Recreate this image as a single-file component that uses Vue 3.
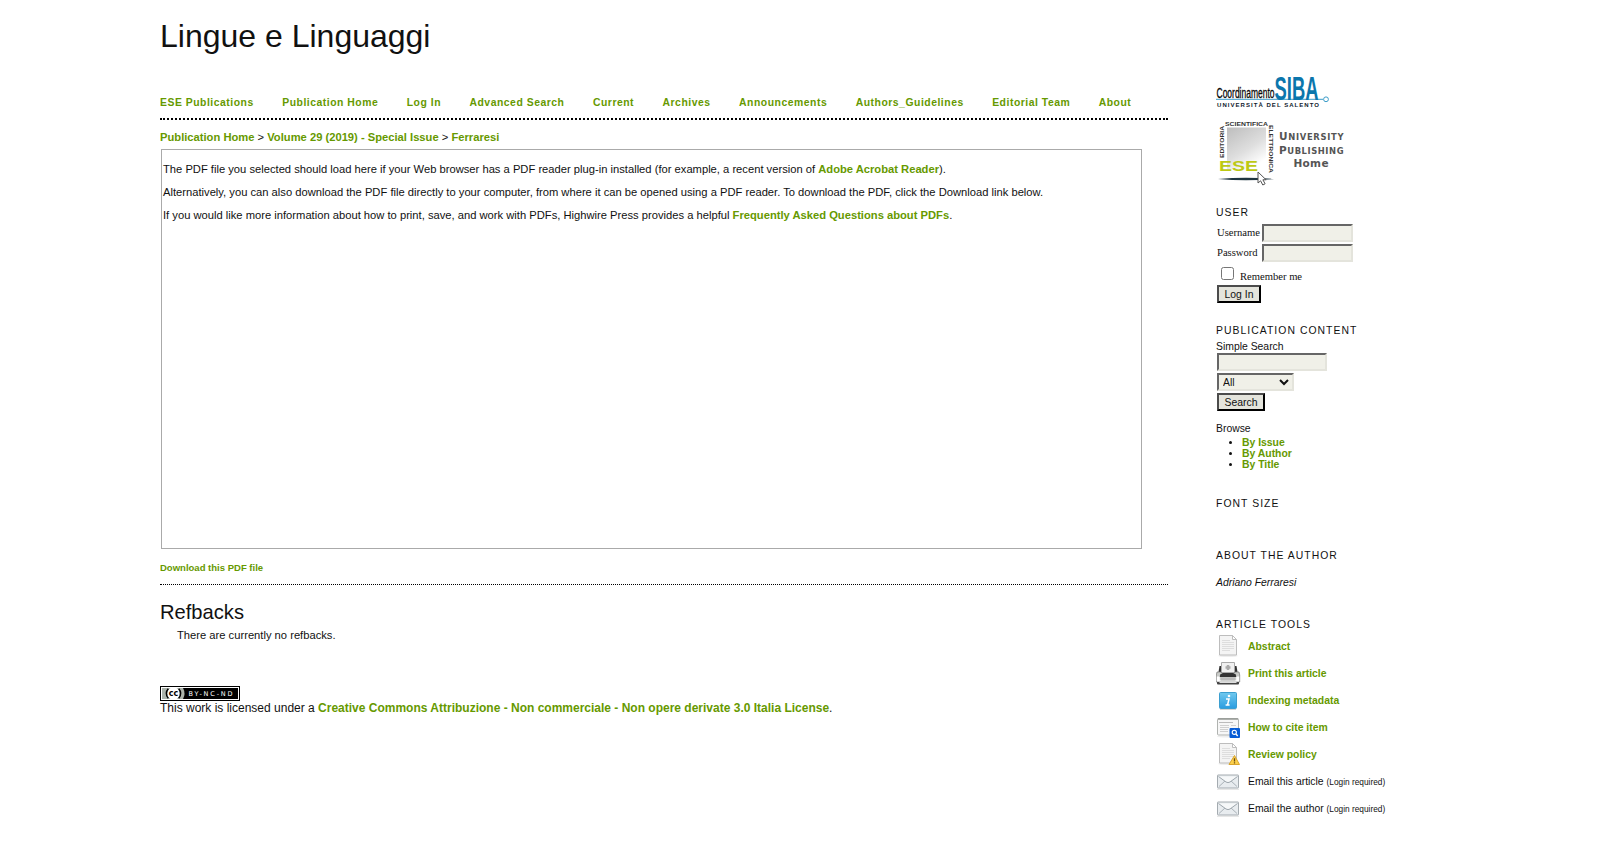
<template>
  <div class="container">
    <div class="main">
      <h1>Lingue e Linguaggi</h1>
      <ul class="navbar">
        <li v-for="item in menu" :key="item"><a href="#">{{ item }}</a></li>
      </ul>
      <div class="breadcrumb">
        <a href="#">Publication Home</a> &gt;
        <a href="#">Volume 29 (2019) - Special Issue</a> &gt;
        <a href="#">Ferraresi</a>
      </div>
      <div class="pdf-frame">
        <p>The PDF file you selected should load here if your Web browser has a PDF reader plug-in installed (for example, a recent version of <a href="#">Adobe Acrobat Reader</a>).</p>
        <p>Alternatively, you can also download the PDF file directly to your computer, from where it can be opened using a PDF reader. To download the PDF, click the Download link below.</p>
        <p>If you would like more information about how to print, save, and work with PDFs, Highwire Press provides a helpful <a href="#">Frequently Asked Questions about PDFs</a>.</p>
      </div>
      <div class="download"><a href="#">Download this PDF file</a></div>
      <h3>Refbacks</h3>
      <p class="refbacks">There are currently no refbacks.</p>
      <svg class="badge" width="80" height="15" viewBox="0 0 80 15">
        <rect width="80" height="15" fill="#000" />
        <rect x="1" y="1" width="78" height="13" fill="#fff" />
        <rect x="2" y="2" width="76" height="11" fill="#000" />
        <path d="M2 2h21q3 5.500 0 11H2z" fill="#abb3ab" />
        <circle cx="13.500" cy="7.500" r="6.300" fill="#fff" />
        <path d="M8.300 2.800q-4 4.700 0 9.400M18.700 2.800q4 4.700 0 9.400" fill="none" stroke="#000" stroke-width="1.500" />
        <text x="8.800" y="10" class="cc" textLength="9.400" lengthAdjust="spacingAndGlyphs">cc</text>
        <text x="28.500" y="10" class="by" textLength="44">BY-NC-ND</text>
      </svg>
      <div class="license">
        This work is licensed under a <a href="#">Creative Commons Attribuzione - Non commerciale - Non opere derivate 3.0 Italia License</a>.
      </div>
    </div>

    <div class="sidebar">
      <svg class="siba" width="114" height="33" viewBox="0 0 114 33">
        <path d="M0 24.300h107" stroke="#3b9cc8" stroke-width="1" />
        <circle cx="110" cy="24.300" r="2.400" fill="#fff" stroke="#3b9cc8" />
        <text x="58.500" y="24.500" class="siba-big" textLength="44" lengthAdjust="spacingAndGlyphs">SIBA</text>
        <text x="0.500" y="22.500" class="siba-name" textLength="58" lengthAdjust="spacingAndGlyphs">Coordinamento</text>
        <text x="1" y="31.500" class="siba-uni" textLength="102">UNIVERSITÀ DEL SALENTO</text>
      </svg>
      <svg class="ese" width="130" height="68" viewBox="0 0 130 68">
        <defs>
          <linearGradient id="eseFill" x1="0" y1="0" x2="0.600" y2="1">
            <stop offset="0" stop-color="#bdbdbd" />
            <stop offset="0.600" stop-color="#dedede" />
            <stop offset="1" stop-color="#fff" />
          </linearGradient>
        </defs>
        <rect x="11" y="7.500" width="39" height="42" fill="url(#eseFill)" />
        <text x="9" y="5.700" class="ese-side" textLength="43" lengthAdjust="spacingAndGlyphs">SCIENTIFICA</text>
        <text transform="translate(8 38) rotate(-90)" class="ese-side" textLength="32" lengthAdjust="spacingAndGlyphs">EDITORIA</text>
        <text transform="translate(52.500 5) rotate(90)" class="ese-side" textLength="48" lengthAdjust="spacingAndGlyphs">ELETTRONICA</text>
        <text x="3" y="50.500" class="ese-big" textLength="39" lengthAdjust="spacingAndGlyphs">ESE</text>
        <path d="M2 59q28-2.500 56 0q-28 2.500-56 0z" fill="#1f3540" />
        <path d="M42 52v11l2.600-2.200 2.200 4.200 2.300-1.200-2.200-4h3.200z" fill="#fff" stroke="#555" />
        <g class="ese-label">
          <text x="63" y="20.300" textLength="64.500">U<tspan class="sc">NIVERSITY</tspan></text>
          <text x="63" y="33.500" textLength="64.500">P<tspan class="sc">UBLISHING</tspan></text>
          <text x="77.500" y="47" textLength="35">Home</text>
        </g>
      </svg>

      <div class="block user">
        <span class="block-title">User</span>
        <form @submit.prevent>
          <div class="field"><label for="username">Username</label><input id="username" v-model="username" type="text" /></div>
          <div class="field"><label for="password">Password</label><input id="password" v-model="password" type="password" /></div>
          <div class="remember"><input id="remember" v-model="remember" type="checkbox" /><label for="remember">Remember me</label></div>
          <button class="login">Log In</button>
        </form>
      </div>

      <div class="block content">
        <span class="block-title">Publication Content</span>
        <form @submit.prevent>
          <label for="query">Simple Search</label>
          <input id="query" v-model="query" class="query" type="text" />
          <select v-model="field">
            <option>All</option>
            <option>Authors</option>
            <option>Title</option>
          </select>
          <button class="search">Search</button>
        </form>
        <div class="browse">Browse</div>
        <ul>
          <li v-for="item in browse" :key="item"><a href="#">{{ item }}</a></li>
        </ul>
      </div>

      <div class="block font-size"><span class="block-title">Font Size</span></div>

      <div class="block author">
        <span class="block-title">About the Author</span>
        <em>Adriano Ferraresi</em>
      </div>

      <div class="block">
        <span class="block-title tools-title">Article Tools</span>
        <div v-for="tool in tools" :key="tool.label" class="tool">
          <svg width="25" height="27" viewBox="0 0 25 27">
            <g v-if="tool.icon === 'doc' || tool.icon === 'review'">
              <ellipse cx="12" cy="22.800" rx="10" ry="1.300" fill="#eee" />
              <path d="M3.500 2.500h13l4 4v15.500h-17z" fill="#f4f4f4" stroke="#bdbdbd" />
              <path d="M16.500 2.500v4h4z" fill="#fff" stroke="#bdbdbd" />
              <path d="M6 7.500h8M6 9.500h12M6 11.500h12M6 13.500h12M6 15.500h12M6 17.500h8" stroke="#dedede" />
              <path v-if="tool.icon === 'review'" d="M18.500 14.500l5 9h-10.500z" fill="#fcd04b" stroke="#d9a52e" stroke-linejoin="round" />
              <path v-if="tool.icon === 'review'" d="M18.500 17.300v3.200M18.500 21.300v1.200" stroke="#6b4b12" stroke-width="1.300" />
            </g>
            <g v-else-if="tool.icon === 'print'">
              <path d="M3.500 6h17l1.500 9H2z" fill="#333" />
              <path d="M5.500 2.500h13v10h-13z" fill="#f1f1f1" stroke="#aaa" />
              <path d="M12 5v5M9.500 7.500h5" stroke="#aaa" stroke-width="2.500" />
              <path d="M1 12h4l2 3h10l2-3h4l.7 3v7H.3v-7z" fill="#c9cbc8" stroke="#737373" stroke-width=".7" />
              <path d="M4.500 14h15l1 3h-17z" fill="#333" />
              <path d="M.8 16.500h3v4h16.400v-4h3v5H.8z" fill="#fff" />
              <path d="M5 17.500h14v3H5z" fill="#bbb" />
              <path d="M1 22h22v1.500q0 1-1 1H2q-1 0-1-1z" fill="#444" />
              <path d="M3.500 22.500h17" stroke="#ddd" />
            </g>
            <g v-else-if="tool.icon === 'info'">
              <defs>
                <linearGradient id="infoFill" x1="0" y1="0" x2="0" y2="1">
                  <stop offset="0" stop-color="#71c9ee" />
                  <stop offset="1" stop-color="#2a9ce0" />
                </linearGradient>
              </defs>
              <rect x="3.500" y="5.500" width="17" height="16" rx="1" fill="url(#infoFill)" stroke="#3c9fd0" />
              <path d="M4 22.500h16" stroke="#d4d4d4" />
              <circle cx="13" cy="9" r="1.300" fill="#fff" />
              <path d="M10 12h3l-1.400 5.700M9.600 18h4" fill="none" stroke="#fff" stroke-width="1.500" />
            </g>
            <g v-else-if="tool.icon === 'cite'">
              <ellipse cx="11" cy="22.500" rx="10" ry="1" fill="#eee" />
              <rect x="1.500" y="4.500" width="21" height="16.500" rx="1" fill="#f7f7f7" stroke="#b0b3b0" />
              <path d="M2 5h20" stroke="#949894" stroke-width="1.500" />
              <path d="M3 8.500h14" stroke="#bbb" />
              <path d="M4 11.500h9M4 13.500h9M4 15.500h8M4 17.500h8M15 11.500h5" stroke="#d0d0d0" />
              <rect x="13.500" y="14" width="10.500" height="10" rx="1" fill="#075cd6" />
              <circle cx="18.300" cy="18.300" r="2.100" fill="none" stroke="#fff" stroke-width="1.100" />
              <path d="M19.900 20l1.800 2" stroke="#fff" stroke-width="1.300" />
            </g>
            <g v-else>
              <path d="M1 21.300h22" stroke="#e2e2e2" />
              <rect x="1.500" y="7" width="21" height="13" rx=".5" fill="#e8ecef" stroke="#a4abb0" />
              <path d="M3 18.500l6.500-6M21 18.500l-6.500-6" stroke="#aab2b8" />
              <path d="M2.500 8.500l7.500 5.500q2 1.200 4 0l7.500-5.500" fill="#f6f8f9" stroke="#9da6ad" />
            </g>
          </svg>
          <a v-if="!tool.login" href="#">{{ tool.label }}</a>
          <span v-else>{{ tool.label }} <small>(Login required)</small></span>
        </div>
      </div>
    </div>
  </div>
</template>

<script setup>
import { ref } from 'vue'

const menu = [
  'ESE Publications',
  'Publication Home',
  'Log In',
  'Advanced Search',
  'Current',
  'Archives',
  'Announcements',
  'Authors_Guidelines',
  'Editorial Team',
  'About'
]

const browse = ['By Issue', 'By Author', 'By Title']

const tools = [
  { label: 'Abstract', icon: 'doc' },
  { label: 'Print this article', icon: 'print' },
  { label: 'Indexing metadata', icon: 'info' },
  { label: 'How to cite item', icon: 'cite' },
  { label: 'Review policy', icon: 'review' },
  { label: 'Email this article', icon: 'mail', login: true },
  { label: 'Email the author', icon: 'mail', login: true }
]

const username = ref('')
const password = ref('')
const remember = ref(false)
const query = ref('')
const field = ref('All')
</script>

<style>
body {
  margin: 0;
  background: #fff;
}
</style>

<style scoped>
.container {
  display: flex;
  gap: 48px;
  padding-left: 160px;
  color: #111;
  font-family: "Liberation Sans", Arial, sans-serif;
  font-size: 11.2px;
}

a {
  color: #690;
  font-weight: bold;
  text-decoration: none;
}

ul {
  list-style: none;
  margin: 0;
  padding: 0;
}

.main {
  width: 1008px;
}

h1 {
  margin: 16px 0 0;
  font-size: 32px;
  font-weight: normal;
  line-height: 40px;
}

.navbar {
  display: flex;
  gap: 28.45px;
  margin-top: 37px;
  padding-bottom: 5px;
  border-bottom: 2px dotted #000;
  font-size: 10.4px;
  letter-spacing: 0.52px;
  line-height: 20px;
  white-space: nowrap;
}

.breadcrumb {
  padding: 7px 0 2px;
  line-height: 20px;
}

.pdf-frame {
  box-sizing: border-box;
  width: 981px;
  height: 400px;
  margin-left: 1px;
  padding: 12px 1px;
  border: 1px solid #aaa;
  white-space: nowrap;
}

.pdf-frame p {
  margin: 0 0 9px;
  line-height: 14px;
}

.download {
  padding: 12px 0 9px;
  border-bottom: 1px dotted #000;
  font-size: 9.52px;
  line-height: 14px;
}

h3 {
  margin: 15px 0 0;
  font-size: 20.16px;
  font-weight: normal;
  line-height: 24px;
}

.refbacks {
  margin: 4px 0 0 17px;
  line-height: 14px;
}

.badge {
  display: block;
  margin-top: 44px;
}

.badge text {
  font-family: "DejaVu Sans", sans-serif;
}

.cc {
  font-size: 9px;
  font-weight: bold;
}

.by {
  fill: #fff;
  font-size: 6.5px;
}

.license {
  font-size: 12px;
  line-height: 14px;
}

.sidebar {
  width: 200px;
  padding-top: 75px;
  font-size: 10.4px;
}

.siba,
.ese {
  display: block;
}

.ese {
  margin-top: 12px;
}

.siba-big {
  fill: #0b76ac;
  font-size: 33px;
  font-weight: bold;
}

.siba-name {
  font-size: 14.5px;
  stroke: #111;
  stroke-width: 0.3px;
}

.siba-uni {
  fill: #10202c;
  font-size: 6px;
  font-weight: bold;
}

.ese-side {
  fill: #333;
  font-size: 5.6px;
  font-weight: bold;
}

.ese-big {
  fill: #bdc913;
  font-size: 14.5px;
  font-weight: bold;
}

.ese-label {
  fill: #555;
  font-family: "DejaVu Sans", Verdana, sans-serif;
  font-size: 10.5px;
  font-weight: bold;
}

.sc {
  font-size: 8.4px;
}

.block-title {
  display: block;
  font-size: 10.4px;
  letter-spacing: 1.04px;
  line-height: 14px;
  text-transform: uppercase;
}

.user {
  margin-top: 18px;
}

.user form {
  padding: 4px 0 0 1px;
  font-family: "Liberation Serif", "Times New Roman", serif;
  font-size: 10.6px;
}

.field {
  display: flex;
  height: 18px;
  margin-bottom: 2px;
  line-height: 17px;
}

.field label {
  width: 45px;
}

.sidebar input:not([type="checkbox"]),
.sidebar select {
  display: block;
  box-sizing: border-box;
  height: 18px;
  margin: 0;
  padding: 0 2px;
  border: 2px solid;
  border-color: #666 #e4e4dc #e4e4dc #666;
  border-radius: 0;
  outline: none;
  background-color: #f0f0e8;
  color: #111;
  font-family: "Liberation Sans", Arial, sans-serif;
  font-size: 10.4px;
}

.field input {
  width: 91px;
}

.remember {
  display: flex;
  height: 21px;
}

.remember input {
  width: 13px;
  height: 13px;
  margin: 3px 6px 0 4px;
}

.remember label {
  padding-top: 6px;
  line-height: 14px;
}

button {
  display: block;
  box-sizing: border-box;
  height: 18px;
  padding: 1px 0 0;
  border: 2px solid;
  border-color: #4c4c4c #000 #000 #4c4c4c;
  background: #e4e4dc;
  color: #111;
  font-family: "Liberation Sans", Arial, sans-serif;
  font-size: 10.4px;
  line-height: 14px;
}

.login {
  width: 44px;
}

.content {
  margin-top: 21px;
}

.content label {
  display: block;
  margin-left: -1px;
  padding: 2px 0 0;
  line-height: 14px;
}

.content form {
  display: flex;
  flex-direction: column;
  gap: 2px;
  padding-left: 1px;
}

.content .query {
  width: 110px;
  margin-top: -3px !important;
}

.content select {
  width: 77px;
  padding: 0 !important;
}

.search {
  width: 48px;
}

.browse {
  margin-top: 11px;
  line-height: 14px;
}

.content ul {
  margin-top: 1px;
  padding-left: 26px;
  list-style: disc;
  line-height: 11px;
}

.content li::marker {
  font-size: 10.4px;
}

.font-size {
  margin-top: 27px;
}

.author {
  margin-top: 38px;
}

.author em {
  display: block;
  margin-top: 13px;
  line-height: 14px;
}

.tools-title {
  margin-top: 28px;
  padding-bottom: 1px;
}

.tool {
  display: flex;
  gap: 7px;
  height: 27px;
  line-height: 28px;
  white-space: nowrap;
}

.tool svg {
  flex: none;
}

small {
  font-size: 8.32px;
}
</style>
